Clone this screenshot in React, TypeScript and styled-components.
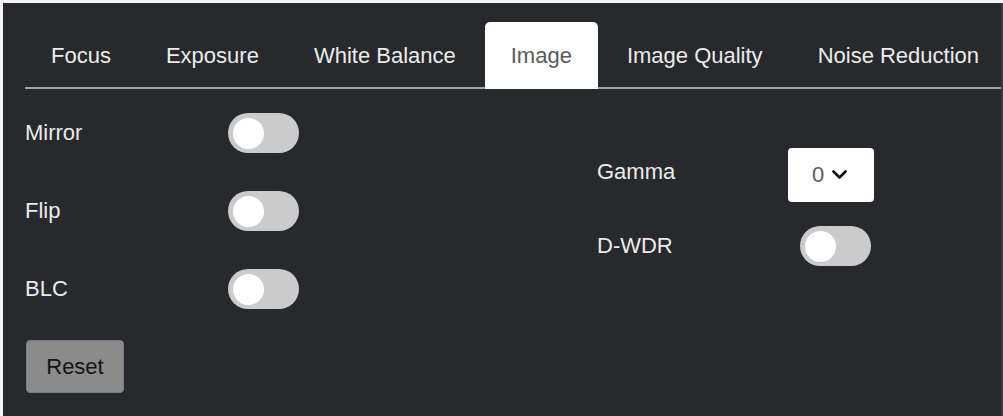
import React from "react";
import styled, { createGlobalStyle } from "styled-components";

const Global = createGlobalStyle`
  html, body { margin: 0; padding: 0; background: #f4f4f4; }
  body { font-family: "Liberation Sans", Arial, sans-serif; }
  * { box-sizing: border-box; }
`;

const Panel = styled.div`
  margin: 3px 0 0 3px;
  width: 1000px;
  height: 413px;
  background: #27292c;
  border-right: 2px solid #3a3c3f;
  color: #e9e9e9;
  font-family: "Liberation Sans", Arial, sans-serif;
  font-size: 22px;
  overflow: hidden;
`;

const TabBar = styled.nav`
  display: flex;
  gap: 3px;
  margin: 0 0 0 22px;
  padding-top: 19px;
  border-bottom: 2px solid #a3a3a3;
`;

const Tab = styled.div<{ $active?: boolean }>`
  height: 67px;
  margin-bottom: -2px;
  padding: 0 26px;
  display: flex;
  align-items: center;
  white-space: nowrap;
  border-radius: 5px 5px 0 0;
  background: ${(p) => (p.$active ? "#ffffff" : "transparent")};
  color: ${(p) => (p.$active ? "#5a5a5a" : "#ececec")};
`;

const Body = styled.div`
  display: grid;
  grid-template-columns: 572px 1fr;
  padding: 24px 0 0 22px;
`;

const Column = styled.div<{ $top?: number }>`
  display: flex;
  flex-direction: column;
  padding-top: ${(p) => p.$top ?? 0}px;
`;

const Row = styled.div<{ $gap: number }>`
  display: flex;
  align-items: center;
  margin-bottom: ${(p) => p.$gap}px;
`;

const Label = styled.div<{ $width: number; $shift?: number }>`
  width: ${(p) => p.$width}px;
  flex: none;
  color: #ececec;
  transform: translateY(${(p) => p.$shift ?? 0}px);
`;

const Track = styled.div`
  width: 71px;
  height: 40px;
  border-radius: 20px;
  background: #cbcbcb;
  padding: 4px 5px;
  display: flex;
  align-items: center;
`;

const Knob = styled.div`
  width: 31px;
  height: 31px;
  border-radius: 50%;
  background: #ffffff;
`;

const Select = styled.div`
  width: 86px;
  height: 54px;
  background: #ffffff;
  border-radius: 4px;
  display: flex;
  align-items: center;
  gap: 8px;
  padding-left: 24px;
  color: #5c5c5c;
`;

const ResetButton = styled.button`
  width: 98px;
  height: 53px;
  margin: 0 0 0 1px;
  background: #8b8b8b;
  border: 1px solid #7d7d7d;
  border-radius: 4px;
  font-family: "Liberation Sans", Arial, sans-serif;
  font-size: 22px;
  color: #141414;
  padding: 0;
`;

const Toggle = () => (
  <Track>
    <Knob />
  </Track>
);

const Chevron = () => (
  <svg width="15" height="10" viewBox="0 0 15 10">
    <polyline points="1.5,1.5 7.5,7.5 13.5,1.5" fill="none" stroke="#111" strokeWidth="2.6" strokeLinecap="round" strokeLinejoin="round" />
  </svg>
);

const tabs = ["Focus", "Exposure", "White Balance", "Image", "Image Quality", "Noise Reduction"];

export default function App() {
  return (
    <>
      <Global />
      <Panel>
        <TabBar>
          {tabs.map((t) => (
            <Tab key={t} $active={t === "Image"}>
              {t}
            </Tab>
          ))}
        </TabBar>
        <Body>
          <Column>
            <Row $gap={38}>
              <Label $width={203}>Mirror</Label>
              <Toggle />
            </Row>
            <Row $gap={38}>
              <Label $width={203}>Flip</Label>
              <Toggle />
            </Row>
            <Row $gap={31}>
              <Label $width={203}>BLC</Label>
              <Toggle />
            </Row>
            <ResetButton>Reset</ResetButton>
          </Column>
          <Column $top={35}>
            <Row $gap={24}>
              <Label $width={191} $shift={-3}>Gamma</Label>
              <Select>
                <span>0</span>
                <Chevron />
              </Select>
            </Row>
            <Row $gap={0}>
              <Label $width={203}>D-WDR</Label>
              <Toggle />
            </Row>
          </Column>
        </Body>
      </Panel>
    </>
  );
}
